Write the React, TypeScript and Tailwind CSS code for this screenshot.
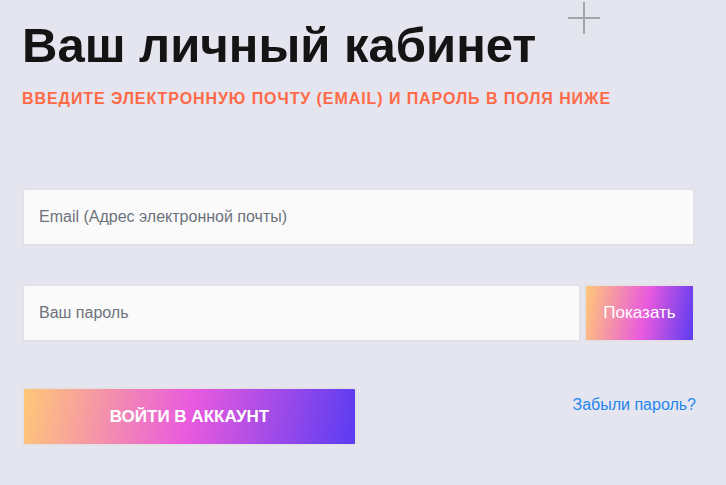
import { useState } from 'react';

export default function App() {
  const [show, setShow] = useState(false);

  return (
    <div className="relative min-h-[485px] w-full bg-[#e5e5ef] font-['Liberation_Sans',Arial,sans-serif] overflow-hidden">
      {/* decorative cross */}
      <div className="absolute left-[583px] top-[2px] h-[32px] w-[2px] bg-[#a4a4ad]" />
      <div className="absolute left-[568px] top-[17px] h-[2px] w-[32px] bg-[#a4a4ad]" />

      <div className="px-[22px] pt-[17px]">
        <h1 className="text-[49px] leading-[56px] font-bold text-[#141414]">Ваш личный кабинет</h1>
        <p className="mt-[17px] text-[16px] leading-[18px] font-bold uppercase tracking-[0.058em] text-[#ff6a48]">
          Введите электронную почту (email) и пароль в поля ниже
        </p>

        <form className="mt-[80px] flex flex-col" onSubmit={(e) => e.preventDefault()}>
          <input
            type="email"
            placeholder="Email (Адрес электронной почты)"
            className="h-[58px] w-[673px] rounded-[3px] border-2 border-[#e1e1e6] bg-[#fafafa] px-[15px] text-[16px] text-[#333] placeholder:text-[#6c727c] outline-none"
          />

          <div className="mt-[38px] flex w-[673px] gap-[3px]">
            <input
              type={show ? 'text' : 'password'}
              placeholder="Ваш пароль"
              className="h-[58px] flex-1 rounded-[3px] border-2 border-[#e1e1e6] bg-[#fafafa] px-[15px] text-[16px] text-[#333] placeholder:text-[#6c727c] outline-none"
            />
            <button
              type="button"
              onClick={() => setShow(!show)}
              className="h-[58px] w-[111px] border-2 border-[#e1e1e6] bg-[linear-gradient(100deg,#ffc877,#e95ade_55%,#5a3cf2)] text-[17px] text-white"
            >
              Показать
            </button>
          </div>

          <div className="mt-[45px] flex w-[674px] items-start justify-between">
            <button
              type="submit"
              className="h-[59px] w-[335px] rounded-[3px] border-2 border-[#e1e1e6] bg-[linear-gradient(100deg,#ffc877,#e95ade_50%,#5a3cf2)] text-[17px] font-bold uppercase text-white"
            >
              Войти в аккаунт
            </button>
            <a href="#" className="mt-[6px] text-[16px] text-[#1e86f0]">
              Забыли пароль?
            </a>
          </div>
        </form>
      </div>
    </div>
  );
}
